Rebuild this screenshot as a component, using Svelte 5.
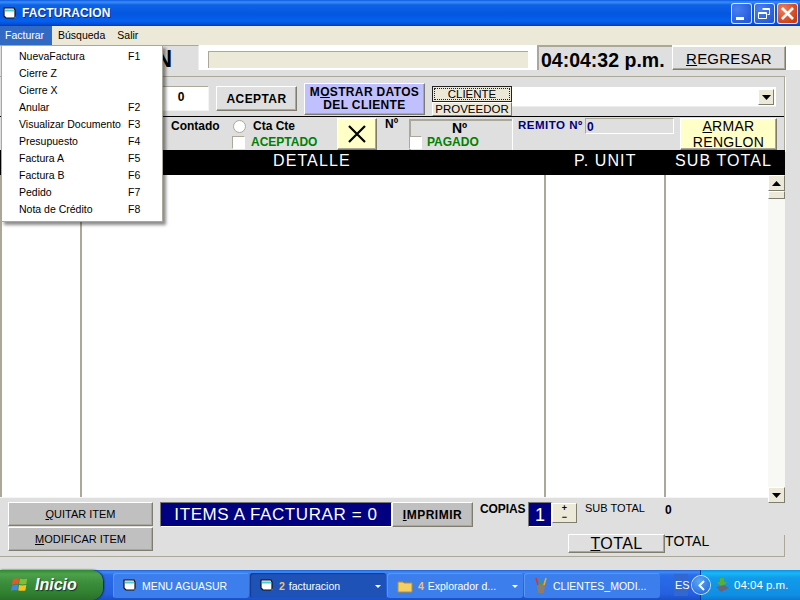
<script>
  const menu = [
    ['NuevaFactura', 'F1'], ['Cierre Z', ''], ['Cierre X', ''], ['Anular', 'F2'],
    ['Visualizar Documento', 'F3'], ['Presupuesto', 'F4'], ['Factura A', 'F5'],
    ['Factura B', 'F6'], ['Pedido', 'F7'], ['Nota de Crédito', 'F8']
  ];
</script>

{#snippet winIcon()}
  <svg class="wicon" width="14" height="13" viewBox="0 0 14 13">
    <path d="M1 1h10l1 2v7l-1 1H3L1 9z" fill="#fff" stroke="#111" stroke-width="1.2"/>
    <path d="M2 2.5h9v2H2z" fill="#3fd0e0"/>
    <path d="M11 11l2-1" stroke="#777" stroke-width="1"/>
  </svg>
{/snippet}

<div class="win">
  <header class="title">
    {@render winIcon()}
    <span class="title-text">FACTURACION</span>
    <div class="caps">
      <div class="cap"><svg width="21" height="21" viewBox="0 0 21 21"><path d="M5 14h8v3H5z" fill="#fff"/></svg></div>
      <div class="cap"><svg width="21" height="21" viewBox="0 0 21 21"><path d="M8.5 5.5h7v6h-2M4.500 9.500h8v6h-8zM4.500 10.500h8M8.500 6.500h7" fill="none" stroke="#fff"/></svg></div>
      <div class="cap close"><svg width="21" height="21" viewBox="0 0 21 21"><path d="M5 5l11 11M16 5L5 16" stroke="#fff" stroke-width="2.600"/></svg></div>
    </div>
  </header>

  <nav class="menubar">
    <span class="mi active">Facturar</span>
    <span class="mi">Búsqueda</span>
    <span class="mi">Salir</span>
  </nav>

  <main class="body">
    <div class="toprow">
      <div class="namebox">N</div>
      <div class="statusfield"></div>
      <div class="clock">04:04:32 p.m.</div>
      <button class="btn regresar"><u>R</u>EGRESAR</button>
    </div>

    <section class="panel">
      <div class="row1">
        <div class="numinput">0</div>
        <button class="btn aceptar">ACEPTAR</button>
        <button class="btn mostrar">M<u>O</u>STRAR DATOS<br />DEL CLIENTE</button>
        <div class="tabs">
          <button class="tab on"><span class="focus">CLIENTE</span></button>
          <button class="tab">PROVEEDOR</button>
        </div>
        <div class="combo"><span class="drop"><svg width="9" height="5" viewBox="0 0 9 5"><path d="M0 0h9L4.500 5z" fill="#000"/></svg></span></div>
      </div>

      <div class="row2">
        <div class="contado">Contado</div>
        <div class="pay">
          <div class="opt"><span class="radio"></span><b class="ctacte">Cta Cte</b></div>
          <div class="opt chk"><span class="check"></span><b class="green">ACEPTADO</b></div>
        </div>
        <button class="btn xbtn"><svg width="20" height="20" viewBox="0 0 20 20"><path d="M2 2l16 16M18 2L2 18" stroke="#000" stroke-width="2.200"/></svg></button>
        <div class="no">Nº</div>
        <div class="nobox">
          <div class="nolabel">Nº</div>
          <div class="opt chk2"><span class="check"></span><b class="green pagado">PAGADO</b></div>
        </div>
        <div class="remito">REMITO Nº</div>
        <div class="remitobox">0</div>
        <button class="btn armar"><u>A</u>RMAR<br />RENGLON</button>
      </div>

      <div class="thead">
        <span class="h-det">DETALLE</span>
        <span class="h-pu">P. UNIT</span>
        <span class="h-st">SUB TOTAL</span>
      </div>
    </section>

    <div class="table">
      <div class="col c1"></div>
      <div class="col c2"></div>
      <div class="col c3"></div>
      <div class="col c4"></div>
      <div class="scroll">
        <span class="sb"><svg width="9" height="5" viewBox="0 0 9 5"><path d="M4.500 0L9 5H0z" fill="#000"/></svg></span>
        <span class="thumb"></span>
        <span class="track"></span>
        <span class="sb"><svg width="9" height="5" viewBox="0 0 9 5"><path d="M0 0h9L4.500 5z" fill="#000"/></svg></span>
      </div>
    </div>

    <section class="bottom">
      <div class="leftbtns">
        <button class="btn gray"><u>Q</u>UITAR ITEM</button>
        <button class="btn gray"><u>M</u>ODIFICAR ITEM</button>
      </div>
      <div class="rightside">
        <div class="brow1">
          <div class="items">ITEMS A FACTURAR = 0</div>
          <button class="btn imprimir"><u>I</u>MPRIMIR</button>
          <b class="copias">COPIAS</b>
          <div class="copybox">1</div>
          <div class="spin"><span>+</span><span>−</span></div>
          <span class="subtotal">SUB TOTAL</span>
          <b class="zero">0</b>
        </div>
        <div class="brow2">
          <button class="btn totalbtn"><u>T</u>OTAL</button>
          <span class="totaltxt">TOTAL</span>
        </div>
      </div>
    </section>
    <div class="bottomgap"></div>
  </main>

  <footer class="taskbar">
    <div class="start">
      <svg width="20" height="18" viewBox="0 0 22 20">
        <path d="M3 4q3-2 7-1l-1 6q-4-1-7 1z" fill="#e8562a"/>
        <path d="M11 3q4 1 8 0l-1 6q-4 1-8 0z" fill="#7cc034"/>
        <path d="M2 11q3-2 7-1l-1 6q-4-1-7 1z" fill="#3f86e8"/>
        <path d="M10 10q4 1 8 0l-1 6q-4 1-8 0z" fill="#f5c320"/>
      </svg>
      <span>Inicio</span>
    </div>
    <div class="tasks">
      <div class="task">{@render winIcon()}<span>MENU AGUASUR</span></div>
      <div class="task current">{@render winIcon()}<span><i>2</i> facturacion</span><em class="caret"></em></div>
      <div class="task">
        <svg class="wicon" width="16" height="14" viewBox="0 0 16 14"><path d="M1 3h5l1 1h8v9H1z" fill="#f4cf62" stroke="#b98e2a"/></svg>
        <span><i>4</i> Explorador d...</span><em class="caret"></em>
      </div>
      <div class="task">
        <svg class="wicon" width="14" height="17" viewBox="0 0 14 17">
          <path d="M3 7h8l-1 9H4z" fill="#8c7d6a"/>
          <path d="M4 8L2 1" stroke="#d8342a" stroke-width="1.500"/>
          <path d="M7 8V3" stroke="#3aa53a" stroke-width="1.500"/>
          <path d="M10 8l2-7" stroke="#e8b020" stroke-width="1.500"/>
        </svg>
        <span>CLIENTES_MODI...</span>
      </div>
    </div>
    <div class="lang">ES</div>
    <div class="tray">
      <span class="chev"><svg width="9" height="11" viewBox="0 0 9 11"><path d="M7 1L2.500 5.500 7 10" fill="none" stroke="#fff" stroke-width="2"/></svg></span>
      <svg class="net" width="18" height="17" viewBox="0 0 18 17">
        <path d="M7 1h4v4h3l-5 5-5-5h3z" fill="#58b030"/>
        <path d="M3 10l8 -2 5 3-8 4z" fill="#667"/>
      </svg>
      <span class="time">04:04 p.m.</span>
    </div>
  </footer>

  <div class="dropdown">
    {#each menu as [label, key]}
      <div class="ditem"><span>{label}</span><span class="key">{key}</span></div>
    {/each}
  </div>
</div>

<style>
  :global(body) { margin: 0; background: #dfdfdf; }
  .win {
    position: relative; width: 800px; height: 600px; overflow: hidden;
    display: flex; flex-direction: column;
    font-family: "Liberation Sans", Arial, sans-serif; color: #000; background: #dfdfdf;
  }
  button { font-family: inherit; padding: 0; margin: 0; color: #000; }
  u { text-underline-offset: 1px; }

  .title {
    height: 26px; flex: none; display: flex; align-items: center; padding-left: 3px; box-sizing: border-box;
    background: linear-gradient(#0a5ae0 0, #3c8cf8 2px, #0d62e6 5px, #0456e0 14px, #0660ee 21px, #0450d8 24px, #0038b8 26px);
  }
  .wicon { flex: none; }
  .title-text { margin-left: 5px; color: #fff; font-weight: bold; font-size: 12px; letter-spacing: .1px; text-shadow: 1px 1px 0 #0a2a90; }
  .caps { margin-left: auto; display: flex; gap: 2px; padding-right: 2px; }
  .cap {
    width: 21px; height: 21px; border-radius: 3px; box-sizing: border-box; overflow: hidden;
    background: radial-gradient(circle at 30% 30%, #4a80f0, #2358d8 80%);
    box-shadow: inset 0 0 0 1px #dfe8fc;
  }
  .cap svg { display: block; }
  .cap.close { background: radial-gradient(circle at 30% 30%, #e88060, #cf3c10 75%); }

  .menubar { height: 19px; flex: none; background: #ece9d8; display: flex; font-size: 10.500px; }
  .mi { padding: 0 6px; line-height: 18px; }
  .mi.active { background: #316ac5; color: #fff; width: 41px; padding: 0 6px 0 5px; }

  .body { flex: 1; min-height: 0; display: flex; flex-direction: column; background: #dfdfdf; }

  .toprow { height: 25px; flex: none; display: flex; background: #fff; }
  .namebox {
    width: 199px; box-sizing: border-box; background: #dfdfdf; border-top: 1px solid #aca899; border-right: 1px solid #eee;
    text-align: right; padding-right: 26px; font-weight: bold; font-size: 23px; line-height: 27px;
  }
  .statusfield { width: 320px; height: 17px; margin: 6px 0 0 9px; box-sizing: border-box; background: #ece9d8; border-top: 1px solid #aca899; border-left: 1px solid #aca899; }
  .clock {
    width: 135px; margin-left: 9px; box-sizing: border-box; background: #dfdfdf; border-top: 2px solid #aca899; border-left: 2px solid #aca899;
    font-weight: bold; font-size: 19.500px; line-height: 26px; padding-left: 2px; white-space: nowrap; overflow: hidden;
  }
  .btn {
    background: #dfdfdf; box-sizing: border-box; cursor: default;
    border: 1px solid; border-color: #fff #7f7c70 #7f7c70 #fff;
    box-shadow: inset -1px -1px 0 #aca899;
  }
  .regresar { width: 114px; font-size: 15px; letter-spacing: .2px; height: 24px; margin-top: 1px; }

  .panel { margin-top: 6px; width: 785px; box-sizing: border-box; flex: none; border-top: 1px solid #aca899; position: relative; }
  .panel::before { content: ""; position: absolute; right: 0; top: 0; height: 75px; border-right: 1px solid #aca899; box-shadow: 1px 0 0 #fff; }
  .row1 { height: 40px; box-sizing: border-box; display: flex; border-bottom: 1px solid #000; padding-left: 150px; }
  .numinput {
    width: 58px; height: 24px; margin-top: 9px; box-sizing: border-box; background: #fff; text-align: center;
    border-top: 1px solid #aca899; border-left: 1px solid #aca899; font-weight: bold; font-size: 12px; line-height: 20px; padding-left: 3px;
    box-shadow: 1px 1px 0 #f4f4f4;
  }
  .aceptar { width: 81px; height: 25px; margin: 9px 0 0 8px; font-weight: bold; font-size: 12px; letter-spacing: .4px; }
  .mostrar { width: 121px; height: 32px; margin: 6px 0 0 7px; background: #c0c0ff; font-weight: bold; font-size: 12px; line-height: 13.500px; letter-spacing: .35px; }
  .tabs { width: 80px; margin: 9px 0 0 7px; display: flex; flex-direction: column; position: relative; z-index: 2; }
  .tab { height: 17px; background: #ece9d8; font-size: 11.500px; border: 1px solid; border-color: #fff #7f7c70 #7f7c70 #fff; }
  .tab.on { height: 16px; border-color: #222; display: flex; padding: 1px; }
  .focus { flex: 1; border: 1px dotted #222; line-height: 10px; font-size: 11.500px; }
  .combo { width: 264px; height: 20px; margin-top: 10px; background: #fff; box-sizing: border-box; border-bottom: 1px solid #eee; position: relative; display: flex; justify-content: flex-end; padding: 2px 2px 0 0; }
  .drop { width: 16px; height: 16px; background: #ece9d8; box-sizing: border-box; border: 1px solid; border-color: #fff #7f7c70 #7f7c70 #fff; display: flex; align-items: center; justify-content: center; }

  .row2 { height: 33px; display: flex; padding-left: 171px; position: relative; font-size: 12px; }
  .contado { width: 60px; font-weight: bold; padding-top: 2px; font-size: 12px; line-height: 15px; }
  .pay { width: 106px; display: flex; flex-direction: column; padding-left: 1px; box-sizing: border-box; }
  .opt { display: flex; align-items: center; }
  .radio { width: 11px; height: 11px; margin: 3px 0 0 1px; border-radius: 50%; background: #fff; border: 1px solid #aca899; flex: none; box-sizing: content-box; }
  .ctacte { margin: 2px 0 0 7px; }
  .chk { margin-top: 2px; }
  .check { width: 11px; height: 11px; background: #fff; border: 1px solid; border-color: #aca899 #fff #fff #aca899; flex: none; }
  .green { color: #008000; margin-left: 6px; }
  .xbtn { width: 40px; height: 32px; margin-top: 1px; background: #ffffc8; display: flex; align-items: center; justify-content: center; }
  .no { width: 24px; font-weight: bold; margin-left: 8px; line-height: 15px; }
  .nobox { width: 103px; height: 33px; padding-top: 1px; box-sizing: border-box; border-left: 2px solid #aca899; border-top: 2px solid #aca899; margin-top: 2px; position: relative; box-shadow: 1px 0 0 #fff; }
  .nolabel { text-align: center; font-weight: bold; font-size: 14px; line-height: 13px; margin-right: 4px; }
  .chk2 { position: relative; left: -2px; margin-top: 0; }
  .pagado { margin-left: 5px; }
  .remito { width: 67px; margin-left: 6px; color: #000080; font-weight: bold; font-size: 11.500px; letter-spacing: .5px; white-space: nowrap; padding-top: 1px; line-height: 15px; }
  .remitobox { width: 89px; height: 16px; margin-top: 1px; box-sizing: border-box; border: 1px solid; border-color: #aca899 #fff #fff #aca899; color: #000080; font-weight: bold; line-height: 17px; padding-left: 1px; }
  .armar { width: 97px; height: 32px; margin: 1px 0 0 6px; background: #ffffc8; font-size: 14px; line-height: 15.500px; letter-spacing: .3px; }

  .thead { height: 25px; background: #000; color: #fff; position: relative; display: flex; font-size: 16px; letter-spacing: 1.100px; line-height: 22px; }
  .h-det { margin-left: 273px; width: 301px; }
  .h-pu { width: 101px; }
  .h-st { white-space: nowrap; }

  .table { height: 322px; width: 785px; flex: none; display: flex; background: #fff; position: relative; z-index: 1; }
  .col { box-sizing: border-box; border-right: 2px solid #aca899; height: 100%; }
  .c1 { width: 82px; border-left: 2px solid #aca899; }
  .c2 { width: 464px; }
  .c3 { width: 120px; }
  .c4 { width: 102px; border-right: 0; }
  .scroll { width: 17px; margin-bottom: -6px; display: flex; flex-direction: column; background: #f8f8f4; }
  .sb, .thumb { box-sizing: border-box; background: #ece9d8; border: 1px solid; border-color: #fff #7f7c70 #7f7c70 #fff; flex: none; }
  .sb { height: 16px; display: flex; align-items: center; justify-content: center; }
  .thumb { height: 8px; }
  .track { flex: 1; }

  .bottom { flex: none; height: 60px; display: flex; box-sizing: border-box; padding: 4px 0 0 8px; width: 785px; border-top: 1px solid #f6f6f6; border-bottom: 1px solid #aca899; position: relative; }
  .bottom::after { content: ""; position: absolute; right: 0; bottom: 0; top: 37px; border-right: 1px solid #aca899; }
  .leftbtns { width: 145px; display: flex; flex-direction: column; gap: 1px; }
  .gray { background: #c0c0c0; height: 24px; font-size: 11px; }
  .rightside { margin-left: 7px; display: flex; flex-direction: column; }
  .brow1 { display: flex; height: 25px; }
  .items { width: 232px; height: 25px; box-sizing: border-box; background: #000080; color: #fff; font-size: 17px; letter-spacing: .6px; line-height: 23px; text-align: center; border: 1px solid; border-color: #777 #fff #fff #777; }
  .imprimir { width: 81px; height: 25px; background: #c0c0c0; font-weight: bold; font-size: 12px; letter-spacing: .5px; }
  .copias { width: 48px; margin-left: 7px; font-size: 12px; letter-spacing: -.1px; line-height: 14px; }
  .copybox { width: 24px; height: 25px; box-sizing: border-box; background: #000080; color: #fff; text-align: center; font-size: 18px; line-height: 25px; border: 1px solid; border-color: #777 #fff #fff #777; }
  .spin { width: 25px; height: 20px; margin-top: 1px; background: #ece9d8; display: flex; flex-direction: column; border: 1px solid; border-color: #fff #7f7c70 #7f7c70 #fff; box-sizing: border-box; }
  .spin span { height: 9px; flex: none; text-align: center; font-weight: bold; font-size: 9px; line-height: 9px; overflow: hidden; }
  .subtotal { width: 80px; margin-left: 8px; font-size: 11px; line-height: 13px; }
  .zero { font-size: 12px; line-height: 16px; }
  .brow2 { display: flex; margin: 7px 0 0 408px; }
  .totalbtn { width: 97px; height: 19px; background: #dfdfdf; font-size: 16px; letter-spacing: .4px; line-height: 17px; }
  .totaltxt { font-size: 14px; line-height: 15px; letter-spacing: .1px; }
  .bottomgap { flex: 1; }

  .taskbar {
    height: 30px; flex: none; display: flex; position: relative; color: #fff;
    background: linear-gradient(#1f5fd8 0, #3f8cf3 2px, #2a6cea 5px, #2560e0 24px, #1a4fc4 30px);
    font-size: 11px;
  }
  .start {
    width: 103px; box-sizing: border-box; display: flex; align-items: center; padding-left: 10px; gap: 5px;
    background: linear-gradient(#2f8a30 0, #4ea04c 4px, #3c8f3c 12px, #2f7f2f 24px, #2a6e2a 30px);
    border-radius: 0 12px 12px 0; box-shadow: 1px 0 2px #123;
  }
  .start span { font-style: italic; font-weight: bold; font-size: 16px; text-shadow: 1px 1px 1px #133; }
  .tasks { display: flex; gap: 1px; margin-left: 10px; padding-top: 3px; width: 552px; }
  .task {
    width: 136px; height: 25px; box-sizing: border-box; border-radius: 3px; background: #3c7fec; display: flex; align-items: center; gap: 5px; padding-left: 10px; position: relative;
    box-shadow: inset 1px 1px 0 #5a96f2; white-space: nowrap; overflow: hidden; font-size: 10.500px;
  }
  .task.current { background: #1e52b7; box-shadow: inset 1px 1px 1px #143a8c; }
  .task i { font-style: normal; color: #f8c060; font-weight: bold; margin-right: 1px; }
  .caret { position: absolute; right: 5px; top: 12px; border: 3px solid transparent; border-top: 3px solid #fff; border-bottom: 0; }
  .lang { margin: 4px 0 0 9px; width: 13px; height: 22px; padding-left: 1px; background: #3267cf; line-height: 22px; font-size: 11px; }
  .tray {
    position: absolute; right: 0; top: 0; bottom: 0; width: 100px; display: flex; align-items: center;
    background: linear-gradient(#0f8fe8 0, #19b8f5 3px, #119be9 8px, #0f8fe4 25px, #0d78d0 30px);
    border-left: 1px solid #0b3f9c; box-sizing: border-box;
  }
  .chev { width: 18px; height: 18px; margin-left: -9px; border-radius: 50%; background: radial-gradient(circle at 40% 30%, #5aa8f4, #1a60d8); box-shadow: 0 0 0 1px #cfe4fa; display: flex; align-items: center; justify-content: center; flex: none; }
  .net { margin-left: 3px; flex: none; }
  .time { margin-left: 3px; font-size: 11.500px; white-space: nowrap; }

  .dropdown {
    position: absolute; left: 1px; top: 45px; width: 162px; height: 177px; box-sizing: border-box; background: #fff; z-index: 5;
    border: 1px solid #aca899; box-shadow: 3px 3px 3px rgba(0,0,0,.45); padding-top: 2px;
    font-size: 10.500px;
  }
  .ditem { height: 17px; line-height: 17px; padding-left: 17px; display: flex; white-space: nowrap; }
  .ditem span:first-child { width: 109px; }
</style>
